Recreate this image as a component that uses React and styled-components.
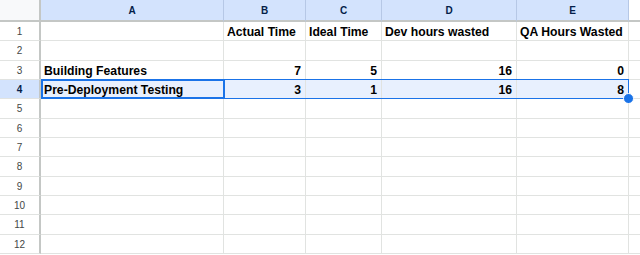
import React from "react";
import styled, { createGlobalStyle, css } from "styled-components";

const GlobalStyle = createGlobalStyle`
  html, body {
    margin: 0;
    padding: 0;
    background: #ffffff;
    overflow: hidden;
  }
  body {
    font-family: "Liberation Sans", Arial, sans-serif;
  }
`;

const COLS = [
  { key: "A", width: 183 },
  { key: "B", width: 82 },
  { key: "C", width: 76 },
  { key: "D", width: 135 },
  { key: "E", width: 112 },
  { key: "F", width: 60 },
];
const SELECTED_COLS = ["A", "B", "C", "D", "E"];
const ROW_H = 19.33;
const HEADER_H = 22;
const ROW_COUNT = 12;
const ACTIVE_ROW = 4;

const data = {
  1: { B: "Actual Time", C: "Ideal Time", D: "Dev hours wasted", E: "QA Hours Wasted" },
  3: { A: "Building Features", B: 7, C: 5, D: 16, E: 0 },
  4: { A: "Pre-Deployment Testing", B: 3, C: 1, D: 16, E: 8 },
};

const Sheet = styled.div`
  display: grid;
  grid-template-columns: 41px ${COLS.map((c) => `${c.width}px`).join(" ")};
  grid-template-rows: ${HEADER_H}px repeat(${ROW_COUNT}, ${ROW_H}px);
  width: 640px;
  height: 255px;
  overflow: hidden;
`;

/* every grid part sits at an explicit track so the overlays never shift it */
const placed = css`
  grid-row: ${(p) => p.$row};
  grid-column: ${(p) => p.$col};
`;

const Corner = styled.div`
  grid-row: 1;
  grid-column: 1;
  box-sizing: border-box;
  background: #f8f9fa;
  border-right: 2px solid #c4c7c5;
  border-bottom: 2px solid #c4c7c5;
`;

const ColHeader = styled.div`
  ${placed};
  box-sizing: border-box;
  display: flex;
  align-items: center;
  justify-content: center;
  font-size: 10px;
  border-bottom: 2px solid #c4c7c5;
  border-right: 1px solid ${(p) => (p.$selected ? "#b6c8e6" : "#e1e3e1")};
  background: ${(p) => (p.$selected ? "#d3e3fd" : "#ffffff")};
  color: ${(p) => (p.$selected ? "#041e49" : "#444746")};
  font-weight: ${(p) => (p.$selected ? 700 : 400)};
`;

const RowHeader = styled.div`
  ${placed};
  box-sizing: border-box;
  display: flex;
  align-items: center;
  justify-content: center;
  padding-top: 1px;
  font-size: 10px;
  border-right: 2px solid #c4c7c5;
  border-bottom: 1px solid #e1e3e1;
  background: ${(p) => (p.$selected ? "#d3e3fd" : "#ffffff")};
  color: ${(p) => (p.$selected ? "#041e49" : "#444746")};
  font-weight: ${(p) => (p.$selected ? 700 : 400)};
`;

const Cell = styled.div`
  ${placed};
  box-sizing: border-box;
  display: flex;
  align-items: flex-end;
  padding: 0 4px 1px 3px;
  font-size: 12.2px;
  font-weight: 700;
  color: #000000;
  white-space: nowrap;
  overflow: hidden;
  border-right: 1px solid #e1e3e1;
  border-bottom: 1px solid #e1e3e1;
  justify-content: ${(p) => (p.$numeric ? "flex-end" : "flex-start")};
  ${(p) =>
    p.$inRange &&
    css`
      background: #e8f0fe;
    `}
`;

/* Selection frame laid over the chosen range in the same grid */
const RangeFrame = styled.div`
  grid-row: ${ACTIVE_ROW + 1};
  grid-column: 2 / ${SELECTED_COLS.length + 2};
  position: relative;
  box-sizing: border-box;
  border: 1px solid #1a73e8;
  margin: -1px 0 0 0;
  pointer-events: none;
`;

const ActiveCell = styled.div`
  grid-row: ${ACTIVE_ROW + 1};
  grid-column: 2;
  box-sizing: border-box;
  border: 2px solid #1a73e8;
  margin: -1px -1px 0 0;
  pointer-events: none;
`;

const FillHandle = styled.span`
  position: absolute;
  right: -6px;
  bottom: -6px;
  width: 9px;
  height: 9px;
  border-radius: 50%;
  background: #1a73e8;
  border: 1px solid #ffffff;
`;

export default function App() {
  const rows = Array.from({ length: ROW_COUNT }, (_, i) => i + 1);
  return (
    <>
      <GlobalStyle />
      <Sheet>
        <Corner />
        {COLS.map((c, ci) => (
          <ColHeader
            key={c.key}
            $row={1}
            $col={ci + 2}
            $selected={SELECTED_COLS.includes(c.key)}
          >
            {c.key === "F" ? "" : c.key}
          </ColHeader>
        ))}
        {rows.map((r) => (
          <React.Fragment key={r}>
            <RowHeader $row={r + 1} $col={1} $selected={r === ACTIVE_ROW}>
              {r}
            </RowHeader>
            {COLS.map((c, ci) => {
              const v = data[r]?.[c.key];
              return (
                <Cell
                  key={c.key}
                  $row={r + 1}
                  $col={ci + 2}
                  $numeric={typeof v === "number"}
                  $inRange={r === ACTIVE_ROW && SELECTED_COLS.includes(c.key)}
                >
                  {v}
                </Cell>
              );
            })}
          </React.Fragment>
        ))}
        <RangeFrame>
          <FillHandle />
        </RangeFrame>
        <ActiveCell />
      </Sheet>
    </>
  );
}
